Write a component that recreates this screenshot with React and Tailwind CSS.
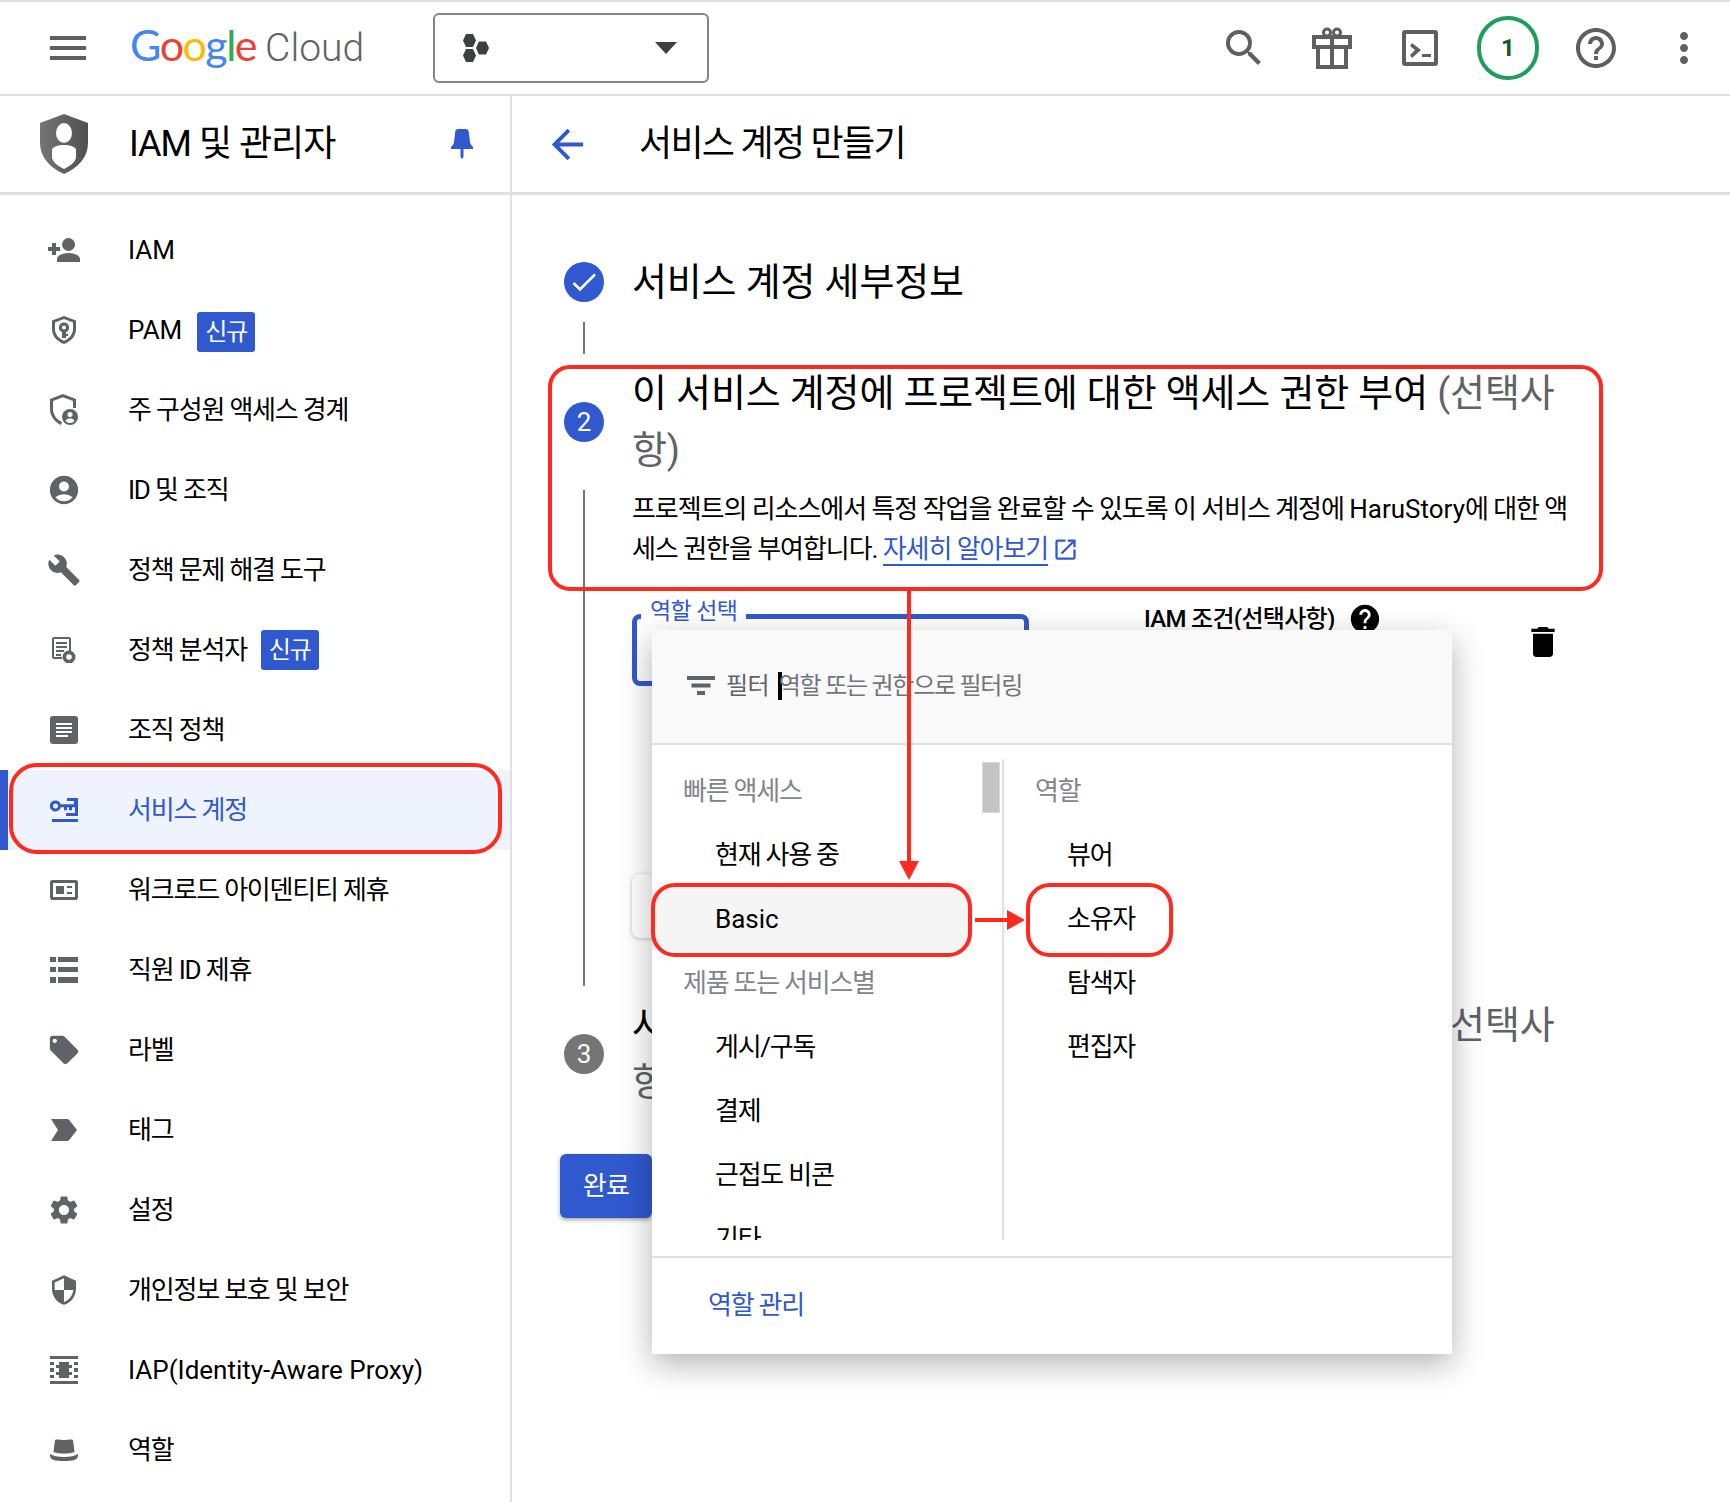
import { MdAccountCircle, MdBuild, MdLocalOffer, MdSettings, MdSecurity, MdSearch, MdHelpOutline, MdHelp, MdDelete, MdArrowBack, MdOpenInNew, MdCheck, MdMenu, MdMoreVert } from 'react-icons/md';

function PersonPlus() {
  return (
    <svg width="32" height="24" viewBox="0 0 32 24" fill="#5f6368">
      <circle cx="20.500" cy="6.500" r="6.500" />
      <path d="M9 24v-3c0-4 7-6 11.500-6S32 17 32 21v3ZM4 5h4v4h4v4H8v4H4v-4H0V9h4Z" />
    </svg>
  );
}

function ArticleBox() {
  return (
    <svg width="28" height="28" viewBox="0 0 28 28" fill="#5f6368">
      <path fillRule="evenodd" d="M3 0h22a3 3 0 0 1 3 3v22a3 3 0 0 1-3 3H3a3 3 0 0 1-3-3V3a3 3 0 0 1 3-3Zm3 7v2h16V7Zm0 4v2h16v-2Zm0 4v2h16v-2Zm0 4v2h12v-2Z" />
    </svg>
  );
}

function ShieldKey() {
  return (
    <svg width="24" height="28" viewBox="0 0 24 28" fill="#5f6368">
      <path fillRule="evenodd" d="M12 0 24 4.5V13c0 7-5 12.500-12 15C5 25.500 0 20 0 13V4.500ZM12 3 3 6.400V13c0 5.500 3.800 9.700 9 11.800 5.200-2.100 9-6.300 9-11.800V6.400Z" />
      <path fillRule="evenodd" d="M12 6.500a5 5 0 0 1 2 9.600V18h2v2h-2v2h-4v-5.900A5 5 0 0 1 12 6.500Zm0 3a2 2 0 1 0 0 4 2 2 0 0 0 0-4Z" />
    </svg>
  );
}

function ShieldPerson() {
  return (
    <svg width="28" height="32" viewBox="0 0 28 32" fill="#5f6368">
      <path d="M13 0 26 5v9h-3V7L13 3.200 3 7v8c0 5.500 3.500 10.500 9 13l-1 3C4.500 28 0 22 0 15V5Z" />
      <circle cx="20" cy="23" r="8" />
      <circle cx="20" cy="20.500" r="2.500" fill="#fff" />
      <path d="M15.500 27c1-2 2.500-2.500 4.500-2.500s3.500.5 4.500 2.500a6 6 0 0 1-9 0Z" fill="#fff" />
    </svg>
  );
}

function DocSearch() {
  return (
    <svg width="24" height="26" viewBox="0 0 24 26" fill="#5f6368">
      <path fillRule="evenodd" d="M2 0h15a2 2 0 0 1 2 2v12h-2V2H2v18h8v2H2a2 2 0 0 1-2-2V2a2 2 0 0 1 2-2Z" />
      <path d="M4 5h11v2H4zM4 9h11v2H4zM4 13h8v2H4zM4 17h5v2H4z" />
      <circle cx="17" cy="20" r="6.500" />
      <circle cx="17" cy="20" r="2.800" fill="#fff" />
    </svg>
  );
}

function ServiceKey({ color }) {
  return (
    <svg width="28" height="24" viewBox="0 0 28 24" fill={color}>
      <path fillRule="evenodd" d="M5.500 2.500a5.500 5.500 0 0 1 5.200 3.700H24V3h-7V0h11v18H16v-3h9V9.200h-3v3h-3v-3h-2v3h-3v-3h-3.300A5.500 5.500 0 1 1 5.500 2.500Zm0 3a2.500 2.500 0 1 0 0 5 2.500 2.500 0 0 0 0-5Z" />
      <path d="M2 21h26v3H2z" />
    </svg>
  );
}

function WorkloadCard() {
  return (
    <svg width="28" height="20" viewBox="0 0 28 20" fill="#5f6368">
      <path fillRule="evenodd" d="M2.500 0h23A2.500 2.500 0 0 1 28 2.500v15a2.500 2.500 0 0 1-2.500 2.500h-23A2.500 2.500 0 0 1 0 17.500v-15A2.500 2.500 0 0 1 2.500 0ZM3 3v14h22V3Z" />
      <path d="M6 6h8v8H6zM17 6h5v2h-5zM17 12h5v2h-5z" />
    </svg>
  );
}

function ListRows() {
  return (
    <svg width="28" height="26" viewBox="0 0 28 26" fill="#5f6368">
      <path d="M0 0h6v5H0zM8 0h20v5H8zM0 10h6v5H0zM8 10h20v5H8zM0 20h6v6H0zM8 20h20v6H8z" />
    </svg>
  );
}

function TagChevron() {
  return (
    <svg width="26" height="22" viewBox="0 0 26 22" fill="#5f6368">
      <path d="M0 0h16c1 0 1.700.4 2.200 1L26 11l-7.800 10c-.5.6-1.200 1-2.200 1H0l7-11Z" />
    </svg>
  );
}

function IapGrid() {
  return (
    <svg width="28" height="28" viewBox="0 0 28 28" fill="#5f6368">
      <path d="M0 0h28v3H0zM0 25h28v3H0zM9 6h10v3h3v3h-3v4h3v3h-3v3H9v-3H6v-3h3v-4H6V9h3zM0 6h4v3H0zM24 6h4v3h-4zM0 12h4v4H0zM24 12h4v4h-4zM0 19h4v3H0zM24 19h4v3h-4z" />
    </svg>
  );
}

function Hat() {
  return (
    <svg width="28" height="22" viewBox="0 0 28 22" fill="#5f6368">
      <path d="M5 1c2.500-1 5 0 9 0s6.500-1 9 0l1.500 12c-3 1-7 1.500-10.500 1.500S6.500 14 3.500 13Z" />
      <path d="M0 15c3 2 8 3 14 3s11-1 14-3c.3 3.500-1 5-3 5.700-3 1-7 1.300-11 1.300s-8-.3-11-1.300C1 20 -.3 18.500 0 15Z" />
    </svg>
  );
}

const navItems = [
  { label: 'IAM', icon: <PersonPlus />, latin: true },
  { label: 'PAM', icon: <ShieldKey />, badge: true, latin: true },
  { label: '주 구성원 액세스 경계', icon: <ShieldPerson /> },
  { label: 'ID 및 조직', icon: <MdAccountCircle size={34} /> },
  { label: '정책 문제 해결 도구', icon: <MdBuild size={34} /> },
  { label: '정책 분석자', icon: <DocSearch />, badge: true },
  { label: '조직 정책', icon: <ArticleBox /> },
  { label: '서비스 계정', icon: <ServiceKey color="#3059cf" />, active: true },
  { label: '워크로드 아이덴티티 제휴', icon: <WorkloadCard /> },
  { label: '직원 ID 제휴', icon: <ListRows /> },
  { label: '라벨', icon: <MdLocalOffer size={34} /> },
  { label: '태그', icon: <TagChevron /> },
  { label: '설정', icon: <MdSettings size={34} /> },
  { label: '개인정보 보호 및 보안', icon: <MdSecurity size={32} /> },
  { label: 'IAP(Identity-Aware Proxy)', icon: <IapGrid />, latin: true },
  { label: '역할', icon: <Hat /> },
];

function TopBar() {
  return (
    <header className="flex h-[96px] shrink-0 items-center border-t-2 border-b-2 border-[#e0e0e0] pl-[44px] text-[#5f5f5f]">
      <MdMenu size={48} />
      <div className="mb-[5px] ml-[38px] flex w-[303px] items-baseline">
        <span className="font-['Lato',sans-serif] text-[43px] leading-none tracking-[-1.5px]">
          <span className="text-[#4285f4]">G</span>
          <span className="text-[#ea4335]">o</span>
          <span className="text-[#fbbc05]">o</span>
          <span className="text-[#4285f4]">g</span>
          <span className="text-[#34a853]">l</span>
          <span className="text-[#ea4335]">e</span>
        </span>
        <span className="ml-[9px] text-[39px] leading-none font-light text-[#5f6368]">Cloud</span>
      </div>
      <button className="flex h-[70px] w-[276px] items-center rounded-md border-2 border-[#80868b] pr-[30px] pl-[28px]">
        <svg width="26" height="28" viewBox="0 0 26 28" fill="#3c4043">
          <path d="M3 0h7l3 6.500L10 13H3L0 6.500ZM16 7.500h7l3 6.500-3 6.500h-7L13 14ZM3 15h7l3 6.500L10 28H3l-3-6.500Z" />
        </svg>
        <span className="flex-1" />
        <span className="h-0 w-0 border-x-[11px] border-t-[12px] border-x-transparent border-t-[#3c4043]" />
      </button>
      <div className="ml-auto flex items-center pr-[22px]">
        <MdSearch size={48} className="mr-[44px]" />
        <svg width="40" height="42" viewBox="0 0 40 42" fill="none" stroke="#5f5f5f" strokeWidth="4" className="mr-[50px]">
          <path d="M2 10h36v10H2ZM6 20v20h28V20ZM20 10v30" />
          <circle cx="15" cy="5.500" r="3.500" strokeWidth="3" />
          <circle cx="25" cy="5.500" r="3.500" strokeWidth="3" />
        </svg>
        <svg width="36" height="36" viewBox="0 0 36 36" fill="#5f5f5f" className="mr-[39px]">
          <path fillRule="evenodd" d="M3 0h30a3 3 0 0 1 3 3v30a3 3 0 0 1-3 3H3a3 3 0 0 1-3-3V3a3 3 0 0 1 3-3Zm1 4v28h28V4Z" />
          <path d="m8 16 2-3 9 7-9 8-2-3 5-5ZM20 24h9v3h-9Z" />
        </svg>
        <div className="mr-[33px] flex h-[64px] w-[62px] items-center justify-center rounded-full border-4 border-[#1e9e5a] text-[24px] font-bold text-[#0d5a2b]">
          1
        </div>
        <MdHelpOutline size={48} className="mr-[40px]" />
        <MdMoreVert size={48} />
      </div>
    </header>
  );
}

function SubBar() {
  return (
    <div className="flex h-[99px] shrink-0 border-b-[3px] border-[#e0e0e0]">
      <div className="flex w-[512px] shrink-0 items-center border-r-2 border-[#e0e0e0] pl-[40px]">
        <svg width="48" height="60" viewBox="0 0 48 60">
          <defs>
            <linearGradient id="sh" x1="0" y1="0" x2="1" y2="0">
              <stop offset="0" stopColor="#757575" />
              <stop offset="1" stopColor="#505050" />
            </linearGradient>
          </defs>
          <path d="M24 0 48 9v20c0 14-10 25-24 31C10 54 0 43 0 29V9Z" fill="url(#sh)" />
          <ellipse cx="24" cy="19" rx="8" ry="10" fill="#fff" />
          <path d="M24 31c6 0 12 2 12 5v7c0 5-6 9-12 12-6-3-12-7-12-12v-7c0-3 6-5 12-5Z" fill="#fff" />
        </svg>
        <span className="ml-[41px] text-[36px] tracking-[-1px] text-black">IAM 및 관리자</span>
        <svg width="22" height="30" viewBox="0 0 22 30" fill="#3059cf" className="mr-[37px] ml-auto">
          <path d="M7 0h8c1.500 0 2.500 1 2.700 2.500L19 13c.3 2 1.500 3.500 3 5v2H0v-2c1.500-1.500 2.700-3 3-5L4.300 2.500C4.500 1 5.500 0 7 0ZM9.500 20h3v8L11 30l-1.500-2Z" />
        </svg>
      </div>
      <div className="flex items-center pl-[32px]">
        <MdArrowBack size={47} className="text-[#3059cf]" />
        <span className="ml-[48px] text-[36px] tracking-[-1.7px] text-black">서비스 계정 만들기</span>
      </div>
    </div>
  );
}

function Sidebar() {
  return (
    <nav className="w-[512px] shrink-0 border-r-2 border-[#e0e0e0] pt-[15px]">
      {navItems.map((item) => (
        <div
          key={item.label}
          className={`flex h-[80px] items-center text-[26px] ${item.latin ? 'tracking-normal' : 'tracking-[-1.2px]'} ${
            item.active ? 'border-l-8 border-[#3059cf] bg-[#eff3fd] text-[#3059cf]' : 'text-black'
          }`}
        >
          <span className={`flex w-[48px] justify-center text-[#5f6368] ${item.active ? 'ml-[32px]' : 'ml-[40px]'}`}>{item.icon}</span>
          <span className="ml-[40px]">{item.label}</span>
          {item.badge && (
            <span className={`flex h-[40px] w-[58px] items-center justify-center rounded-[3px] bg-[#3059cf] text-[24px] tracking-[-0.9px] text-white ${item.latin ? 'mt-[4px] ml-[15px]' : 'ml-[14px]'}`}>
              신규
            </span>
          )}
        </div>
      ))}
    </nav>
  );
}

function StepCircle({ gray, children }) {
  return (
    <span className={`flex h-[40px] w-[40px] shrink-0 items-center justify-center rounded-full text-[26px] text-white ${gray ? 'bg-[#757575]' : 'bg-[#3059cf]'}`}>
      {children}
    </span>
  );
}

function MainPanel() {
  return (
    <main className="flex-1 pt-[67px] pl-[52px]">
      <div className="flex items-center gap-[28px]">
        <StepCircle>
          <MdCheck size={32} />
        </StepCircle>
        <h2 className="text-[38px] leading-[40px] font-normal tracking-[-0.15px] text-black">서비스 계정 세부정보</h2>
      </div>
      <div className="mt-[20px] ml-[19px] h-[32px] w-[2px] bg-[#757575]" />

      <div className="mt-[11px] flex items-center gap-[28px]">
        <StepCircle>2</StepCircle>
        <h2 className="text-[38px] leading-[57px] tracking-[-0.15px] text-black">
          이 서비스 계정에 프로젝트에 대한 액세스 권한 부여 <span className="text-[#5f6368]">(선택사<br />항)</span>
        </h2>
      </div>
      <div className="mt-[9px] flex">
        <div className="mt-[2px] ml-[19px] w-[2px] bg-[#757575]" />
        <div className="ml-[47px] h-[498px]">
          <p className="pt-[1px] text-[26px] leading-[40px] tracking-[-1.05px] text-black">
            프로젝트의 리소스에서 특정 작업을 완료할 수 있도록 이 서비스 계정에 <span className="tracking-normal">HaruStory</span>에 대한 액<br />
            세스 권한을 부여합니다.{' '}
            <a className="border-b-2 border-[#3059cf] text-[#3059cf]">자세히 알아보기</a>
            <MdOpenInNew size={27} className="ml-[4px] inline-block align-[-5px] text-[#3059cf]" />
          </p>
          <div className="mt-[35px] flex items-start">
            <div className="relative mt-[10px] h-[72px] w-[397px] rounded-lg border-[5px] border-[#3059cf]">
              <span className="absolute -top-[24px] left-[4px] bg-white px-[9px] text-[23px] tracking-[-0.6px] text-[#3059cf]">역할 선택</span>
            </div>
            <span className="ml-[115px] text-[24px] leading-[30px] font-medium tracking-[-0.7px] text-black">IAM 조건(선택사항)</span>
            <MdHelp size={34} className="ml-[13px] -mt-[2px] text-black" />
            <MdDelete size={40} className="ml-[141px] mt-[18px] text-black" />
          </div>
          <div className="mt-[188px] h-[64px] w-[180px] rounded-lg bg-white shadow-[0_1px_4px_rgba(0,0,0,0.25)]" />
        </div>
      </div>

      <div className="mt-[11px] flex items-center gap-[28px]">
        <StepCircle gray>3</StepCircle>
        <h2 className="text-[38px] leading-[57px] tracking-[-0.15px] text-black">
          사용자에게 이 서비스 계정에 대한 액세스 권한 부여 <span className="text-[#5f6368]">(선택사<br />항)</span>
        </h2>
      </div>
      <button className="mt-[43px] -ml-[4px] h-[64px] w-[92px] rounded-md bg-[#3059cf] text-[26px] tracking-[-0.6px] text-white shadow-[0_2px_4px_rgba(0,0,0,0.35)]">
        완료
      </button>
    </main>
  );
}

function RoleDropdown() {
  const leftRows = [
    { label: '빠른 액세스', head: true },
    { label: '현재 사용 중' },
    { label: 'Basic', on: true },
    { label: '제품 또는 서비스별', head: true },
    { label: '게시/구독' },
    { label: '결제' },
    { label: '근접도 비콘' },
    { label: '기타' },
  ];
  const rightRows = [{ label: '역할', head: true }, { label: '뷰어' }, { label: '소유자' }, { label: '탐색자' }, { label: '편집자' }];
  const rowClass = (r) =>
    `flex h-[64px] shrink-0 items-center ${r.head ? 'pl-[31px] text-[#80868b]' : 'pl-[63px] text-black'} ${r.on ? 'w-[320px] bg-[#f5f5f5] tracking-normal' : ''}`;

  return (
    <div className="absolute top-[630px] left-[652px] flex h-[724px] w-[800px] flex-col bg-white text-[26px] tracking-[-1.25px] shadow-[0_10px_30px_rgba(0,0,0,0.3)]">
      <div className="flex h-[115px] shrink-0 items-center border-b-2 border-[#e0e0e0] bg-[#f9f9f9] pb-[2px] pl-[35px] text-[#5f6368]">
        <svg width="28" height="19" viewBox="0 0 28 19" fill="#5f6368">
          <path d="M0 0h28v4H0zM4.500 7.500h19v4h-19zM10 15h8v4h-8z" />
        </svg>
        <span className="ml-[11px] text-[24px] tracking-[-0.7px]">필터</span>
        <span className="ml-[9px] h-[28px] w-[4px] bg-black" />
        <span className="ml-[-3px] text-[24px] tracking-[-1.25px] text-[#70757a]">역할 또는 권한으로 필터링</span>
      </div>
      <div className="h-[511px] shrink-0 pt-[14px]">
        <div className="flex h-[481px] overflow-hidden">
          <div className="relative w-[352px] shrink-0 border-r-2 border-[#e0e0e0]">
            {leftRows.map((r) => (
              <div key={r.label} className={rowClass(r)}>{r.label}</div>
            ))}
            <span className="absolute top-[3px] right-[2px] h-[51px] w-[18px] border border-[#d8d8d8] bg-[#c4c4c4]" />
          </div>
          <div className="flex-1">
            {rightRows.map((r) => (
              <div key={r.label} className={rowClass(r)}>{r.label}</div>
            ))}
          </div>
        </div>
      </div>
      <div className="flex flex-1 items-center border-t-2 border-[#e0e0e0] pb-[2px] pl-[56px] text-[#3059cf]">역할 관리</div>
    </div>
  );
}

function Annotations() {
  const box = 'absolute border-4 border-[#ff2a1f]';
  return (
    <>
      <div className={`${box} top-[763px] left-[9px] h-[91px] w-[493px] rounded-[28px]`} />
      <div className={`${box} top-[365px] left-[548px] h-[226px] w-[1055px] rounded-[22px]`} />
      <div className={`${box} top-[883px] left-[651px] h-[74px] w-[321px] rounded-[24px]`} />
      <div className={`${box} top-[883px] left-[1026px] h-[74px] w-[147px] rounded-[24px]`} />
      <div className="absolute top-[589px] left-[907px] h-[274px] w-[4px] bg-[#ff2a1f]" />
      <svg width="20" height="19" viewBox="0 0 20 19" fill="#ff2a1f" className="absolute top-[861px] left-[899px]">
        <path d="M0 0h20L10 19Z" />
      </svg>
      <div className="absolute top-[918px] left-[975px] h-[4px] w-[33px] bg-[#ff2a1f]" />
      <svg width="18" height="20" viewBox="0 0 18 20" fill="#ff2a1f" className="absolute top-[910px] left-[1007px]">
        <path d="M0 0v20l18-10Z" />
      </svg>
    </>
  );
}

export default function App() {
  return (
    <div className="relative flex h-[1502px] w-[1730px] flex-col overflow-hidden bg-white font-['Roboto','Noto_Sans_CJK_KR',sans-serif]">
      <TopBar />
      <SubBar />
      <div className="flex flex-1">
        <Sidebar />
        <MainPanel />
      </div>
      <RoleDropdown />
      <Annotations />
    </div>
  );
}
